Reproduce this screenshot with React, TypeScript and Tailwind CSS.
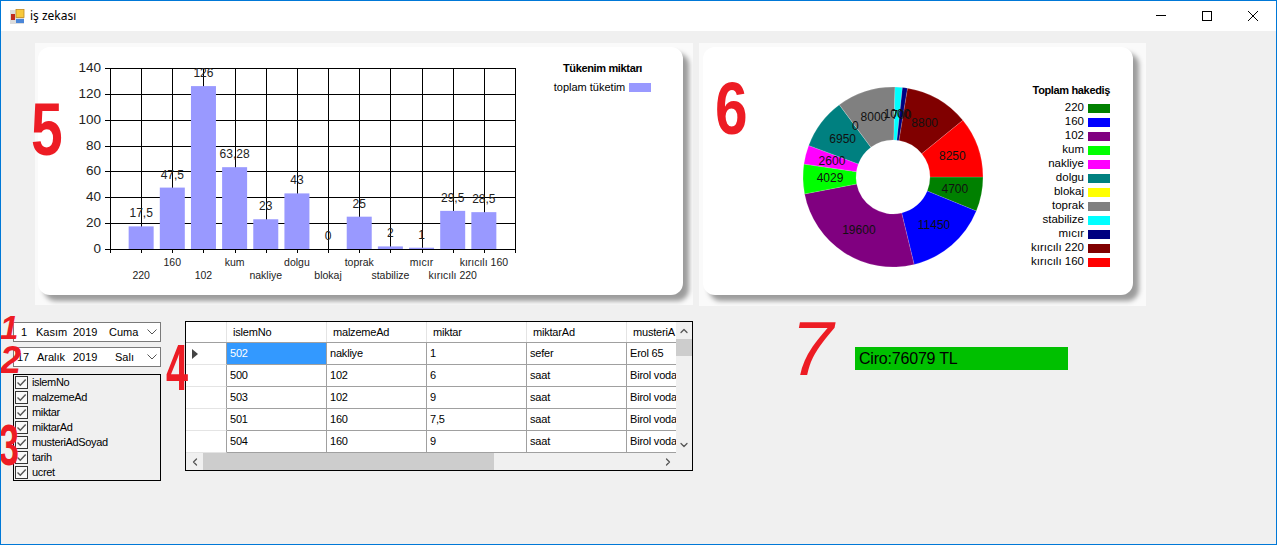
import { ChevronDown, ChevronLeft, ChevronRight, ChevronUp } from 'lucide-react';

const materials = [
  { name: '220', amount: 17.5, label: '17,5', revenue: 4700, color: '#008000' },
  { name: '160', amount: 47.5, label: '47,5', revenue: 11450, color: '#0000ff' },
  { name: '102', amount: 126, label: '126', revenue: 19600, color: '#800080' },
  { name: 'kum', amount: 63.28, label: '63,28', revenue: 4029, color: '#00ff00' },
  { name: 'nakliye', amount: 23, label: '23', revenue: 2600, color: '#ff00ff' },
  { name: 'dolgu', amount: 43, label: '43', revenue: 6950, color: '#008080' },
  { name: 'blokaj', amount: 0, label: '0', revenue: 0, color: '#ffff00' },
  { name: 'toprak', amount: 25, label: '25', revenue: 8000, color: '#808080' },
  { name: 'stabilize', amount: 2, label: '2', revenue: 1000, color: '#00ffff' },
  { name: 'mıcır', amount: 1, label: '1', revenue: 700, color: '#000080' },
  { name: 'kırıcılı 220', amount: 29.5, label: '29,5', revenue: 8800, color: '#800000' },
  { name: 'kırıcılı 160', amount: 28.5, label: '28,5', revenue: 8250, color: '#ff0000' },
];

const columns = ['islemNo', 'malzemeAd', 'miktar', 'miktarAd', 'musteriA'];
const rows = [
  ['502', 'nakliye', '1', 'sefer', 'Erol 65'],
  ['500', '102', '6', 'saat', 'Birol voda'],
  ['503', '102', '9', 'saat', 'Birol voda'],
  ['501', '160', '7,5', 'saat', 'Birol voda'],
  ['504', '160', '9', 'saat', 'Birol voda'],
];
const checks = ['islemNo', 'malzemeAd', 'miktar', 'miktarAd', 'musteriAdSoyad', 'tarih', 'ucret'];

function BarChart() {
  const left = 110;
  const right = 515;
  const top = 68;
  const base = 249;
  const colW = (right - left) / 13;
  const scale = (base - top) / 140;
  const ticks = [0, 20, 40, 60, 80, 100, 120, 140];
  return (
    <svg viewBox="38 47 507 248" className="w-[507px] h-[248px] shrink-0">
      {ticks.map((t) => {
        const y = Math.round(base - t * scale) + 0.5;
        return (
          <g key={t}>
            <line x1={left - 5} x2={right} y1={y} y2={y} stroke="#000" />
            <text x={101} y={y + 3.5} textAnchor="end" className="text-[13.5px]" fill="#222">{t}</text>
          </g>
        );
      })}
      {Array.from({ length: 14 }).map((_, i) => {
        const x = Math.round(left + colW * i) + 0.5;
        return <line key={i} x1={x} x2={x} y1={top} y2={base + 4} stroke="#000" />;
      })}
      {materials.map((m, i) => {
        const cx = left + colW * (i + 1);
        const h = m.amount * scale;
        return <rect key={m.name} x={cx - 12.5} y={base - h} width={25} height={h} fill="#9999ff" />;
      })}
      {materials.map((m, i) => {
        const cx = left + colW * (i + 1);
        const barTop = base - m.amount * scale;
        return (
          <g key={m.name}>
            <text x={cx} y={barTop - 9} textAnchor="middle" className="text-[12px]" fill="#222">{m.label}</text>
            <text x={cx} y={i % 2 === 1 ? 266 : 279} textAnchor="middle" className="text-[10.5px]" fill="#222">{m.name}</text>
          </g>
        );
      })}
    </svg>
  );
}

function DonutChart() {
  const cx = 893;
  const cy = 177;
  const outer = 90;
  const inner = 37;
  const total = materials.reduce((sum, m) => sum + m.revenue, 0);
  let acc = 0;
  const point = (r: number, deg: number) => {
    const a = (deg * Math.PI) / 180;
    return `${cx + r * Math.cos(a)} ${cy + r * Math.sin(a)}`;
  };
  const slices = materials.map((m) => {
    const from = (acc / total) * 360;
    acc += m.revenue;
    const to = (acc / total) * 360;
    const large = to - from > 180 ? 1 : 0;
    const d = `M${point(outer, from)}A${outer} ${outer} 0 ${large} 1 ${point(outer, to)}L${point(inner, to)}A${inner} ${inner} 0 ${large} 0 ${point(inner, from)}Z`;
    const mid = ((from + to) / 2) * (Math.PI / 180);
    return { m, d, lx: cx + 63 * Math.cos(mid), ly: cy + 63 * Math.sin(mid) };
  });
  return (
    <svg viewBox="703 47 320 248" className="w-[320px] h-[248px] shrink-0">
      {slices.map(({ m, d }) => (
        <path key={m.name} d={d} fill={m.color} stroke="#fff" strokeOpacity="0.3" strokeWidth="0.5" />
      ))}
      {slices.map(({ m, lx, ly }) => (
        <text key={m.name} x={lx} y={ly + 4} textAnchor="middle" className="text-[12px]" fill="#111">{m.revenue}</text>
      ))}
    </svg>
  );
}

function DateBox({ day, month, name, dayClass, monthClass, yearClass }: { day: string; month: string; name: string; dayClass: string; monthClass: string; yearClass: string }) {
  return (
    <div className="h-5 w-[148px] border border-[#7a7a7a] bg-white flex items-center text-[11px] text-black">
      <span className={dayClass}>{day}</span>
      <span className={monthClass}>{month}</span>
      <span className={yearClass}>2019</span>
      <span className="flex-1">{name}</span>
      <svg viewBox="0 0 10 6" className="w-[10px] h-[6px] mr-[3px] shrink-0" fill="none" stroke="#555">
        <path d="M0.5 0.5L5 5L9.5 0.5" />
      </svg>
    </div>
  );
}

function CheckRow({ label }: { label: string }) {
  return (
    <div className="h-[15px] flex items-center text-[11px] tracking-[-0.35px] text-black pl-[1px]">
      <span className="w-[13px] h-[13px] border border-[#333] bg-[#f8f8f8] flex items-center justify-center shrink-0">
        <svg viewBox="0 0 11 11" className="w-[11px] h-[11px]" fill="none" stroke="#555" strokeWidth="1.4">
          <path d="M1.5 5.5L4.3 8.3L9.7 2.5" />
        </svg>
      </span>
      <span className="ml-1">{label}</span>
    </div>
  );
}

function DataGrid() {
  return (
    <div className="w-[508px] h-[150px] border border-black flex flex-col text-[11px] tracking-[-0.2px] text-black shrink-0">
      <div className="flex h-[131px]">
        <div className="w-[490px] overflow-hidden bg-white">
          <div className="flex h-[21px] border-b border-[#a0a0a0] w-[600px]">
            <div className="w-[41px] border-r border-[#e4e4e4] shrink-0" />
            {columns.map((c) => (
              <div key={c} className="w-[100px] shrink-0 border-r border-[#e4e4e4] pl-[6px] flex items-center whitespace-nowrap">{c}</div>
            ))}
          </div>
          {rows.map((r, i) => (
            <div key={r[0]} className="flex h-[22px] w-[600px]">
              <div className="w-[41px] shrink-0 border-r border-b border-r-[#a0a0a0] border-b-[#e4e4e4] flex items-center pl-[6px]">
                {i === 0 && (
                  <svg viewBox="0 0 6 10" className="w-[6px] h-[10px]"><path d="M0 0L6 5L0 10Z" fill="#444" /></svg>
                )}
              </div>
              {r.map((cell, j) => (
                <div
                  key={j}
                  className={`w-[100px] shrink-0 border-r border-b border-[#a0a0a0] pl-[3px] flex items-center whitespace-nowrap ${i === 0 && j === 0 ? 'bg-[#3399ff] text-white' : ''}`}
                >
                  {cell}
                </div>
              ))}
            </div>
          ))}
        </div>
        <div className="w-4 flex flex-col items-center text-[#555]">
          <div className="h-[17px] flex items-center justify-center"><ChevronUp size={12} strokeWidth={2.5} /></div>
          <div className="h-[17px] w-full bg-[#cdcdcd]" />
          <div className="flex-1" />
          <div className="h-[17px] flex items-center justify-center"><ChevronDown size={12} strokeWidth={2.5} /></div>
        </div>
      </div>
      <div className="flex-1 w-[490px] flex text-[#555]">
        <div className="w-[17px] flex items-center justify-center"><ChevronLeft size={12} strokeWidth={2.5} /></div>
        <div className="w-[291px] bg-[#cdcdcd]" />
        <div className="flex-1" />
        <div className="w-[17px] flex items-center justify-center"><ChevronRight size={12} strokeWidth={2.5} /></div>
      </div>
    </div>
  );
}

export default function App() {
  return (
    <div className="relative w-[1277px] h-[545px] border border-[#0078d7] bg-[#f0f0f0] overflow-hidden flex flex-col font-['Liberation_Sans',sans-serif]">
      {/* Title bar */}
      <div className="h-[30px] bg-white flex items-center shrink-0">
        <svg viewBox="0 0 15 15" className="w-[15px] h-[15px] ml-[9px]">
          <rect x="0" y="1" width="14" height="14" fill="#dcdcdc" />
          <rect x="1" y="5" width="4" height="6" fill="#c02a1c" />
          <rect x="6" y="0.5" width="8" height="8" fill="#f7c83c" stroke="#c08a20" strokeWidth="0.8" />
          <rect x="6" y="10" width="8" height="4" fill="#4a86d8" />
        </svg>
        <span className="ml-[5px] text-xs text-black font-['Noto_Sans',sans-serif]">iş zekası</span>
        <div className="ml-auto flex h-full">
          <div className="w-[46px] flex items-center justify-center">
            <svg viewBox="0 0 10 10" className="w-[10px] h-[10px]" stroke="#000" fill="none"><path d="M0 4.5H10" /></svg>
          </div>
          <div className="w-[46px] flex items-center justify-center">
            <svg viewBox="0 0 10 10" className="w-[10px] h-[10px]" stroke="#000" fill="none"><rect x="0.5" y="0.5" width="9" height="9" /></svg>
          </div>
          <div className="w-[46px] flex items-center justify-center">
            <svg viewBox="0 0 10 10" className="w-[10px] h-[10px]" stroke="#000" fill="none"><path d="M0 0L10 10M10 0L0 10" /></svg>
          </div>
        </div>
      </div>

      {/* Charts */}
      <div className="flex gap-[6px] pl-[34px] pt-3">
        <div className="w-[658px] h-[262px] bg-[#fafafa] overflow-hidden pl-[3px] pt-1 shrink-0">
          <div className="w-[645px] h-[248px] bg-white rounded-[12px] shadow-[6px_6px_5px_rgba(0,0,0,0.38)] flex">
            <BarChart />
            <div className="ml-[9px] pt-[14px] w-[97px] flex flex-col items-center text-black">
              <div className="h-[14px] flex items-center text-[11px] tracking-[-0.35px] font-bold whitespace-nowrap">Tükenim miktarı</div>
              <div className="mt-[5px] h-[14px] flex items-center text-[11px] whitespace-nowrap">
                <span>toplam tüketim</span>
                <span className="ml-1 w-[22px] h-[9px] bg-[#9999ff]" />
              </div>
            </div>
          </div>
        </div>
        <div className="w-[447px] h-[263px] bg-[#fafafa] overflow-hidden pl-1 pt-1 shrink-0">
          <div className="w-[430px] h-[248px] bg-white rounded-[12px] shadow-[6px_6px_5px_rgba(0,0,0,0.38)] flex">
            <DonutChart />
            <div className="flex-1 flex flex-col items-end pr-[23px] pt-9 text-black">
              <div className="h-[14px] flex items-center text-[11px] tracking-[-0.35px] font-bold whitespace-nowrap">Toplam hakediş</div>
              <div className="mt-1">
                {materials.map((m) => (
                  <div key={m.name} className="h-[14px] flex items-center justify-end text-[11.5px] whitespace-nowrap">
                    <span>{m.name}</span>
                    <span className="ml-1 w-[22px] h-[9px]" style={{ backgroundColor: m.color }} />
                  </div>
                ))}
              </div>
            </div>
          </div>
        </div>
      </div>

      {/* Filters, table, total */}
      <div className="flex mt-[15px] pl-3">
        <div className="w-[148px] pt-[1px] shrink-0">
          <DateBox day="1" month="Kasım" name="Cuma" dayClass="ml-[7px] w-[15px]" monthClass="w-[37px]" yearClass="w-[36px]" />
          <div className="mt-[5px]">
            <DateBox day="17" month="Aralık" name="Salı" dayClass="ml-[3px] w-5" monthClass="w-9" yearClass="w-[42px]" />
          </div>
          <div className="mt-[7px] h-[107px] border border-black">
            {checks.map((c) => (
              <CheckRow key={c} label={c} />
            ))}
          </div>
        </div>
        <div className="ml-6">
          <DataGrid />
        </div>
        <div className="ml-[162px] mt-[26px] w-[213px] h-[23px] bg-[#00c000] pl-1 flex items-center text-base tracking-[-0.2px] text-black whitespace-nowrap">
          Ciro:76079 TL
        </div>
      </div>

      {/* Red hand-written markers over the form */}
      <span className="absolute left-[-1px] top-[310px] text-[33px] leading-none font-bold italic text-[#ed1c24]">1</span>
      <span className="absolute left-[-1px] top-[340px] text-[38px] leading-none font-bold italic text-[#ed1c24]">2</span>
      <span className="absolute left-[-2px] top-[415px] text-[58px] leading-none font-bold origin-left scale-x-[0.62] text-[#ed1c24]">3</span>
      <span className="absolute left-[165px] top-[335px] text-[64px] leading-none font-bold origin-left scale-x-[0.62] text-[#ed1c24]">4</span>
      <span className="absolute left-[30px] top-[91px] text-[75px] leading-none font-bold origin-left scale-x-[0.76] text-[#ed1c24]">5</span>
      <span className="absolute left-[714px] top-[70px] text-[75px] leading-none font-bold origin-left scale-x-[0.78] text-[#ed1c24]">6</span>
      <span className="absolute left-[790px] top-[310px] text-[76px] leading-none italic text-[#ed1c24]">7</span>
    </div>
  );
}
